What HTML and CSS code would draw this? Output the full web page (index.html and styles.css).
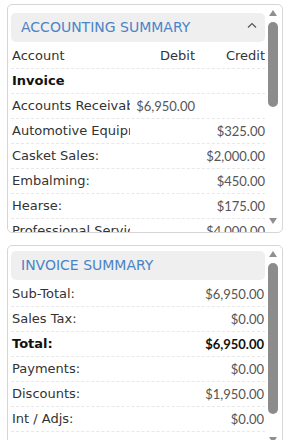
FILE: index.html
```html
<!DOCTYPE html>
<html lang="en">
<head>
    <meta charset="UTF-8">
    <meta name="viewport" content="width=device-width, initial-scale=1.0">
    <title>Summary</title>
    <link rel="stylesheet" href="styles.css">
</head>
<body>
    <div class="panel panel-accounting">
        <div class="panel-body">
            <div class="panel-head">
                <span class="panel-title">ACCOUNTING SUMMARY</span>
                <svg class="chevron" width="10" height="6" viewBox="0 0 10 6"><polyline points="1,5.5 5,1.5 9,5.5" fill="none" stroke="#555" stroke-width="1.2"/></svg>
            </div>
            <div class="row cols">
                <span class="label">Account</span>
                <span class="amount head">Debit</span>
                <span class="amount head">Credit</span>
            </div>
            <div class="row cols">
                <span class="label bold">Invoice</span>
                <span class="amount"></span>
                <span class="amount"></span>
            </div>
            <div class="row cols">
                <span class="label">Accounts Receivable</span>
                <span class="amount">$6,950.00</span>
                <span class="amount"></span>
            </div>
            <div class="row cols">
                <span class="label">Automotive Equipment</span>
                <span class="amount"></span>
                <span class="amount">$325.00</span>
            </div>
            <div class="row cols">
                <span class="label">Casket Sales:</span>
                <span class="amount"></span>
                <span class="amount">$2,000.00</span>
            </div>
            <div class="row cols">
                <span class="label">Embalming:</span>
                <span class="amount"></span>
                <span class="amount">$450.00</span>
            </div>
            <div class="row cols">
                <span class="label">Hearse:</span>
                <span class="amount"></span>
                <span class="amount">$175.00</span>
            </div>
            <div class="row cols">
                <span class="label">Professional Services:</span>
                <span class="amount"></span>
                <span class="amount">$4,000.00</span>
            </div>
        </div>
        <div class="scrollbar">
            <span class="arrow up"></span>
            <div class="track"><div class="thumb thumb-accounting"></div></div>
            <span class="arrow down"></span>
        </div>
    </div>

    <div class="panel panel-invoice">
        <div class="panel-body">
            <div class="panel-head">
                <span class="panel-title">INVOICE SUMMARY</span>
            </div>
            <div class="row pair">
                <span class="label">Sub-Total:</span>
                <span class="amount">$6,950.00</span>
            </div>
            <div class="row pair">
                <span class="label">Sales Tax:</span>
                <span class="amount">$0.00</span>
            </div>
            <div class="row pair">
                <span class="label bold">Total:</span>
                <span class="amount bold">$6,950.00</span>
            </div>
            <div class="row pair">
                <span class="label">Payments:</span>
                <span class="amount">$0.00</span>
            </div>
            <div class="row pair">
                <span class="label">Discounts:</span>
                <span class="amount">$1,950.00</span>
            </div>
            <div class="row pair">
                <span class="label">Int / Adjs:</span>
                <span class="amount">$0.00</span>
            </div>
        </div>
        <div class="scrollbar">
            <span class="arrow up"></span>
            <div class="track"><div class="thumb thumb-invoice"></div></div>
            <span class="arrow down"></span>
        </div>
    </div>
</body>
</html>
```

FILE: styles.css
```css
body {
    margin: 0;
    padding: 4px 5px 0 7px;
    background-color: #ffffff;
    font-family: "DejaVu Sans", sans-serif;
    font-size: 13px;
    color: #333333;
}
.panel {
    display: flex;
    border: 1px solid #d6d6d6;
    border-radius: 5px;
    overflow: hidden;
}
.panel-accounting {
    height: 227px;
}
.panel-invoice {
    height: 205px;
    margin-top: 12px;
}
.panel-body {
    width: 255px;
    padding-left: 3px;
    overflow: hidden;
}
.panel-accounting .panel-body {
    padding-top: 8px;
}
.panel-invoice .panel-body {
    padding-top: 5px;
}
.panel-head {
    display: flex;
    align-items: center;
    justify-content: space-between;
    height: 29px;
    padding: 0 8px 0 10px;
    margin-bottom: 2px;
    background-color: #efefef;
    border-radius: 5px;
}
.panel-title {
    font-size: 14px;
    color: #4a84c6;
    line-height: 29px;
}
.chevron {
    margin-top: -6px;
}
.row {
    height: 24px;
    line-height: 24px;
    border-bottom: 1px dashed #e8e8e8;
    white-space: nowrap;
}
.cols {
    display: grid;
    grid-template-columns: 123px 62px 70px;
}
.cols .label {
    margin-right: 4px;
}
.pair {
    display: flex;
    justify-content: space-between;
}
.label {
    padding-left: 1px;
    overflow: hidden;
}
.amount {
    padding-right: 1px;
    text-align: right;
    font-family: Lato, "Liberation Sans", sans-serif;
    font-size: 13px;
    color: #555555;
}
.amount.head {
    font-family: "DejaVu Sans", sans-serif;
    color: #333333;
}
.bold {
    font-weight: bold;
    color: #111111;
}
.amount.bold {
    color: #111111;
}
.scrollbar {
    display: flex;
    flex-direction: column;
    align-items: center;
    width: 13px;
    padding: 5px 3px 8px 1px;
}
.arrow {
    width: 0;
    height: 0;
    border-left: 4.5px solid transparent;
    border-right: 4.5px solid transparent;
}
.arrow.up {
    border-bottom: 6px solid #909090;
}
.arrow.down {
    border-top: 6px solid #909090;
}
.track {
    flex: 1;
    width: 100%;
    display: flex;
    justify-content: center;
}
.thumb {
    width: 10px;
    margin-top: 6px;
    background-color: #8c8c8c;
    border-radius: 5px;
}
.thumb-accounting {
    height: 85px;
}
.thumb-invoice {
    height: 151px;
}
```
